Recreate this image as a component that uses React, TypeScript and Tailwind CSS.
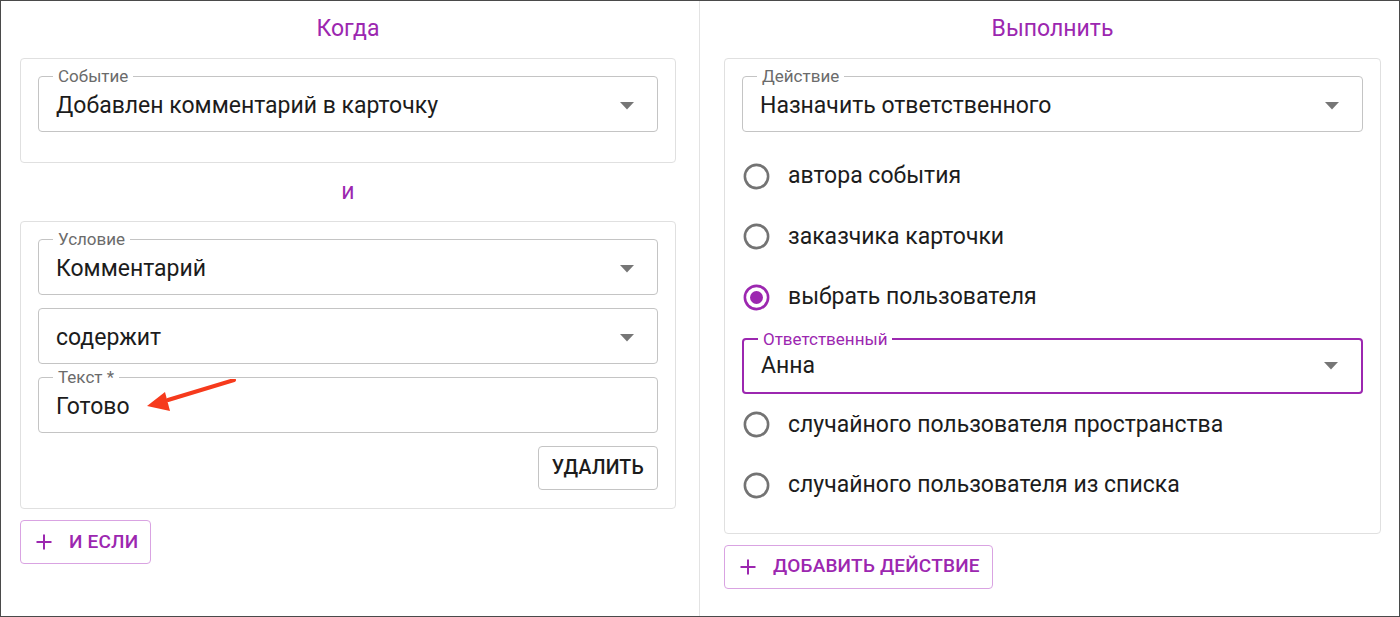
import type { ReactNode } from "react";

const font = { fontFamily: "Roboto, 'Noto Sans', sans-serif" };

function Caret() {
  return (
    <svg width="14" height="8" viewBox="0 0 14 8" className="shrink-0">
      <path d="M0 0 L14 0 L7 7.5 Z" fill="#767676" />
    </svg>
  );
}

type FieldProps = {
  label?: string;
  value: string;
  active?: boolean;
  select?: boolean;
  children?: ReactNode;
};

function Field({ label, value, active, select = true, children }: FieldProps) {
  return (
    <div
      className={
        "relative flex h-[56px] items-center justify-between rounded-[4px] bg-white pl-[17px] pr-[23px] " +
        (active ? "border-2 border-[#9c27b0]" : "border border-[#c4c4c4] pt-[4px]")
      }
    >
      {label ? (
        <span
          className={
            "absolute top-[-10px] left-[14px] bg-white px-[5px] text-[17px] leading-[18px] " +
            (active ? "text-[#9c27b0]" : "text-[#6b6b6b]")
          }
        >
          {label}
        </span>
      ) : null}
      <span className="text-[23px] leading-[28px] text-[#1c1c1c]">{value}</span>
      {select ? <Caret /> : null}
      {children}
    </div>
  );
}

function Radio({ label, checked }: { label: string; checked?: boolean }) {
  return (
    <div className="flex h-[60.5px] items-center gap-[16px]">
      <svg width="31" height="31" viewBox="0 0 24 24" className="ml-[-1px] shrink-0">
        <circle cx="12" cy="12" r="9" fill="none" stroke={checked ? "#9c27b0" : "#737373"} strokeWidth="2" />
        {checked ? <circle cx="12" cy="12" r="5" fill="#9c27b0" /> : null}
      </svg>
      <span className="text-[23px] leading-[28px] text-[#1c1c1c]">{label}</span>
    </div>
  );
}

function AddButton({ label }: { label: string }) {
  return (
    <button className="flex h-[44px] items-center gap-[16px] self-start rounded-[4px] border border-[#d9a3e2] bg-white pl-[14px] pr-[12px] text-[19px] font-medium tracking-[0.2px] text-[#9c27b0]">
      <svg width="18" height="18" viewBox="0 0 18 18">
        <path d="M9 1.5 V16.5 M1.5 9 H16.5" stroke="#9c27b0" strokeWidth="2" />
      </svg>
      {label}
    </button>
  );
}

function Arrow() {
  return (
    <svg
      className="pointer-events-none absolute left-[104px] top-[2px]"
      width="100"
      height="40"
      viewBox="0 0 100 40"
    >
      <path d="M92 1 L26 21" stroke="#f63a1c" strokeWidth="4" strokeLinecap="round" />
      <path d="M5 27 L23 13 L28 32 Z" fill="#f63a1c" />
    </svg>
  );
}

export default function App() {
  return (
    <div
      className="grid h-[617px] w-[1400px] grid-cols-2 border border-[#4a4a4a] bg-white"
      style={font}
    >
      <div className="flex flex-col border-r border-[#e3e3e3] pl-[19px] pr-[23px]">
        <div className="flex h-[57px] items-center justify-center text-[23px] text-[#9c27b0]">
          Когда
        </div>
        <div className="rounded-[4px] border border-[#e0e0e0] px-[17px] pt-[17px] pb-[30px]">
          <Field label="Событие" value="Добавлен комментарий в карточку" />
        </div>
        <div className="flex h-[58px] items-center justify-center text-[23px] text-[#9c27b0]">
          и
        </div>
        <div className="flex flex-col gap-[13px] rounded-[4px] border border-[#e0e0e0] px-[17px] pt-[17px] pb-[18px]">
          <Field label="Условие" value="Комментарий" />
          <Field value="содержит" />
          <div className="relative">
            <Field label="Текст *" value="Готово" select={false} />
            <Arrow />
          </div>
          <button className="h-[44px] self-end rounded-[4px] border border-[#c4c4c4] bg-white px-[13px] text-[19.5px] font-medium tracking-[0.2px] text-[#1c1c1c]">
            УДАЛИТЬ
          </button>
        </div>
        <div className="mt-[11px] flex">
          <AddButton label="И ЕСЛИ" />
        </div>
      </div>

      <div className="flex flex-col pl-[24px] pr-[18px]">
        <div className="flex h-[57px] items-center justify-center text-[23px] text-[#9c27b0]">
          Выполнить
        </div>
        <div className="flex flex-col rounded-[4px] border border-[#e0e0e0] px-[17px] pt-[17px] pb-[17px]">
          <Field label="Действие" value="Назначить ответственного" />
          <div className="mt-[14px]">
            <Radio label="автора события" />
            <Radio label="заказчика карточки" />
            <Radio label="выбрать пользователя" checked />
          </div>
          <div className="mt-[10px]">
            <Field label="Ответственный" value="Анна" active />
          </div>
          <div className="mt-[1px]">
            <Radio label="случайного пользователя пространства" />
            <Radio label="случайного пользователя из списка" />
          </div>
        </div>
        <div className="mt-[11px] flex">
          <AddButton label="ДОБАВИТЬ ДЕЙСТВИЕ" />
        </div>
      </div>
    </div>
  );
}
